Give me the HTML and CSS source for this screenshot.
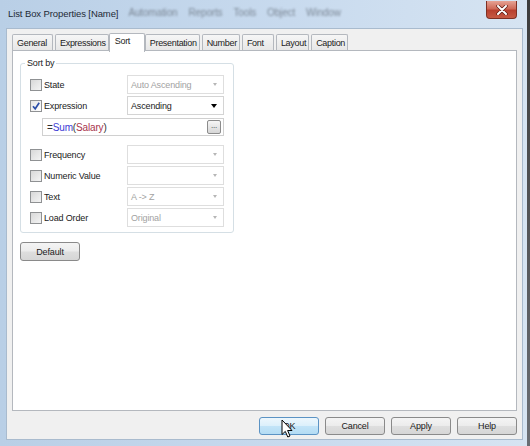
FILE: index.html
```html
<!DOCTYPE html>
<html lang="en">

<head>
    <meta charset="UTF-8">
    <meta name="viewport" content="width=device-width, initial-scale=1.0">
    <title>List Box Properties [Name]</title>
    <link rel="stylesheet" href="styles.css">
</head>

<body>
    <div class="window">

        <div class="titlebar">
            <span class="title">List Box Properties [Name]</span>
            <!-- menu of the app behind the glass, blurred -->
            <span class="behind">
                <span>Automation</span><span>Reports</span><span>Tools</span><span>Object</span><span>Window</span>
            </span>
            <div class="close">
                <svg width="12" height="10" viewBox="0 0 12 10">
                    <path d="M2 1 L10 9 M10 1 L2 9" stroke="#5a1a12" stroke-width="3.4" stroke-linecap="round" />
                    <path d="M2 1 L10 9 M10 1 L2 9" stroke="#ffffff" stroke-width="2" stroke-linecap="round" />
                </svg>
            </div>
        </div>

        <div class="client">

            <div class="tabs">
                <div class="tab">General</div>
                <div class="tab">Expressions</div>
                <div class="tab active">Sort</div>
                <div class="tab">Presentation</div>
                <div class="tab">Number</div>
                <div class="tab">Font</div>
                <div class="tab">Layout</div>
                <div class="tab">Caption</div>
            </div>

            <div class="panel">
                <fieldset class="group">
                    <legend>Sort by</legend>

                    <div class="row">
                        <label class="check"><span class="box"></span>State</label>
                        <div class="combo disabled"><span>Auto Ascending</span><span class="arrow"></span></div>
                    </div>

                    <div class="row">
                        <label class="check"><span class="box checked">
                                <svg width="10" height="10" viewBox="0 0 10 10">
                                    <path d="M2 5.2 L4.2 7.8 L8.2 1.8" fill="none" stroke="#2b4ea8" stroke-width="1.7" />
                                </svg>
                            </span>Expression</label>
                        <div class="combo"><span>Ascending</span><span class="arrow"></span></div>
                    </div>

                    <div class="edit">
                        <span class="code">=<span class="fn">Sum</span>(<span class="field">Salary</span>)</span>
                        <span class="dots">...</span>
                    </div>

                    <div class="row">
                        <label class="check"><span class="box"></span>Frequency</label>
                        <div class="combo disabled"><span></span><span class="arrow"></span></div>
                    </div>

                    <div class="row">
                        <label class="check"><span class="box"></span>Numeric Value</label>
                        <div class="combo disabled"><span></span><span class="arrow"></span></div>
                    </div>

                    <div class="row">
                        <label class="check"><span class="box"></span>Text</label>
                        <div class="combo disabled"><span>A -&gt; Z</span><span class="arrow"></span></div>
                    </div>

                    <div class="row">
                        <label class="check"><span class="box"></span>Load Order</label>
                        <div class="combo disabled"><span>Original</span><span class="arrow"></span></div>
                    </div>
                </fieldset>

                <button class="btn default">Default</button>
            </div>

            <div class="actions">
                <button class="btn hover">OK
                    <svg class="cursor" width="13" height="20" viewBox="0 0 13 20">
                        <path d="M1 1 L1 15.5 L4.3 12.4 L6.8 18 L9 17 L6.6 11.5 L11 11.5 Z" fill="#ffffff" stroke="#000000" stroke-width="1" stroke-linejoin="round" />
                    </svg>
                </button>
                <button class="btn">Cancel</button>
                <button class="btn">Apply</button>
                <button class="btn">Help</button>
            </div>

        </div>
    </div>
</body>

</html>
```

FILE: styles.css
```css
body {
    margin: 0;
    width: 530px;
    height: 446px;
    overflow: hidden;
    background: linear-gradient(#3c3c3c, #6a6e74);
    font-family: "Liberation Sans", Arial, sans-serif;
    font-size: 9px;
    letter-spacing: -0.15px;
    color: #1a1a1a;
}

.window {
    width: 527px;
    height: 446px;
    box-sizing: border-box;
    padding: 0 5px 6px 7px;
    display: flex;
    flex-direction: column;
    background: linear-gradient(to right, #b9cfe6, #c8daee 55%, #d6e4f2);
}

/* title bar */

.titlebar {
    height: 28px;
    display: flex;
    align-items: flex-start;
    margin-right: -5px;
}

.title {
    margin: 8px 0 0 1px;
    font-size: 9.5px;
    letter-spacing: -0.1px;
    color: #1e2a36;
}

.behind {
    display: flex;
    gap: 11px;
    margin: 7px 0 0 10px;
    font-size: 10px;
    color: #7c8896;
    filter: blur(1.3px);
}

.close {
    margin: 1px 10px 0 auto;
    width: 31px;
    height: 18px;
    box-sizing: border-box;
    border: 1px solid #7e3024;
    border-top: none;
    border-radius: 0 0 4px 4px;
    background: linear-gradient(#e6a394, #cf6a58 45%, #b8402f 55%, #c65a44);
    display: flex;
    justify-content: center;
    align-items: center;
}

/* dialog body */

.client {
    flex: 1;
    display: flex;
    flex-direction: column;
    padding: 3px 5px 4px 5px;
    background-color: #f0f0f0;
    border: 1px solid #a9bbce;
    margin-left: -1px;
    margin-right: -1px;
}

.tabs {
    display: flex;
    align-items: flex-end;
    height: 19px;
}

.tab {
    min-width: 32px;
    height: 17px;
    box-sizing: border-box;
    padding: 3px 2px 0 4px;
    margin-right: 2px;
    border: 1px solid #b4b8be;
    border-bottom: none;
    border-radius: 2px 2px 0 0;
    background: linear-gradient(#f6f6f6, #e6e6e6);
    color: #222222;
    letter-spacing: -0.3px;
}

.tab:first-child {
    min-width: 41px;
}

.tab.active {
    position: relative;
    z-index: 1;
    min-width: 36px;
    height: 19px;
    margin: 0 0 -1px -2px;
    padding: 2px 4px 0 5px;
    background: #ffffff;
}

.panel {
    flex: 1;
    margin-top: -1px;
    padding: 6px 0 0 7px;
    background-color: #ffffff;
    border: 1px solid #b4b8be;
}

/* sort group */

.group {
    width: 214px;
    box-sizing: border-box;
    margin: 0;
    padding: 5px 9px 5px 9px;
    border: 1px solid #d5dfe5;
    border-radius: 3px;
}

.group legend {
    padding: 0 2px;
    margin-left: -5px;
    line-height: 13px;
    color: #222222;
}

.row {
    display: flex;
    align-items: center;
    height: 19px;
    margin-bottom: 2px;
}

.row:last-child {
    margin-bottom: 0;
}

.check {
    width: 97px;
    display: flex;
    align-items: center;
    gap: 2px;
}

.box {
    width: 12px;
    height: 12px;
    box-sizing: border-box;
    border: 1px solid #8f9193;
    background: linear-gradient(135deg, #d8d8d8, #f4f4f4);
    display: flex;
    justify-content: center;
    align-items: center;
}

.box.checked {
    background: linear-gradient(135deg, #e6e6e6, #ffffff);
}

.combo {
    width: 97px;
    height: 19px;
    box-sizing: border-box;
    border: 1px solid #d4d4d4;
    background-color: #ffffff;
    display: flex;
    align-items: center;
    justify-content: space-between;
    padding: 0 6px 0 3px;
}

.combo .arrow {
    width: 0;
    height: 0;
    border-left: 3.5px solid transparent;
    border-right: 3.5px solid transparent;
    border-top: 4px solid #000000;
}

.combo.disabled {
    color: #a2a2a2;
    border-color: #dedede;
}

.combo.disabled .arrow {
    border-left-width: 2.5px;
    border-right-width: 2.5px;
    border-top: 3px solid #b6b6b6;
}

.edit {
    width: 182px;
    height: 18px;
    box-sizing: border-box;
    margin: 3px 0 9px 12px;
    border: 1px solid #d0d0d0;
    display: flex;
    align-items: center;
    justify-content: space-between;
    padding: 0 2px 0 4px;
    font-size: 10px;
}

.code {
    color: #333333;
}

.code .fn {
    color: #3d3dd6;
}

.code .field {
    color: #a8344c;
}

.dots {
    width: 14px;
    height: 14px;
    box-sizing: border-box;
    border: 1px solid #8c8c8c;
    border-radius: 2px;
    background: linear-gradient(#f6f6f6, #d6d6d6);
    font-size: 8px;
    line-height: 10px;
    text-align: center;
    color: #333333;
}

/* buttons */

.btn {
    position: relative;
    width: 60px;
    height: 18px;
    padding: 0;
    border: 1px solid #8a8a8a;
    border-radius: 3px;
    background: linear-gradient(#f4f4f4, #ececec 48%, #dedede 52%, #d6d6d6);
    font-family: inherit;
    font-size: 9px;
    letter-spacing: -0.15px;
    color: #1a1a1a;
}

.default {
    display: block;
    height: 19px;
    margin-top: 9px;
}

.actions {
    display: flex;
    justify-content: flex-end;
    gap: 6px;
    margin-top: 6px;
}

.btn.hover {
    border-color: #5b93c4;
    background: linear-gradient(#edf7fd, #dcf0fb 48%, #c2e4f8 52%, #b4dcf4);
}

.cursor {
    position: absolute;
    left: 21px;
    top: 1px;
}
```
